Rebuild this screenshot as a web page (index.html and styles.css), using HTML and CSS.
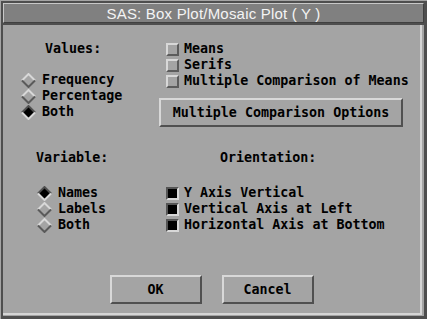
FILE: index.html
```html
<!DOCTYPE html>
<html lang="en">
<head>
  <meta charset="UTF-8">
  <title>SAS: Box Plot/Mosaic Plot ( Y )</title>
  <link rel="stylesheet" href="styles.css">
</head>
<body>
  <div class="window">
    <div class="titlebar">SAS: Box Plot/Mosaic Plot ( Y )</div>
    <div class="panel">
      <div class="content">

        <!-- values + display options -->
        <div class="section top">
          <div class="col left">
            <div class="group-label values-label">Values:</div>
            <div class="options values-options">
              <div class="option">
                <svg class="radio" viewBox="0 0 15 15"><polygon points="7.5,1 14,7.5 7.5,14 1,7.5"/><polyline class="hi" points="1,7.5 7.5,1 14,7.5"/><polyline class="lo" points="1,7.5 7.5,14 14,7.5"/></svg>
                <span>Frequency</span>
              </div>
              <div class="option">
                <svg class="radio" viewBox="0 0 15 15"><polygon points="7.5,1 14,7.5 7.5,14 1,7.5"/><polyline class="hi" points="1,7.5 7.5,1 14,7.5"/><polyline class="lo" points="1,7.5 7.5,14 14,7.5"/></svg>
                <span>Percentage</span>
              </div>
              <div class="option">
                <svg class="radio on" viewBox="0 0 15 15"><polygon points="7.5,1 14,7.5 7.5,14 1,7.5"/><polyline class="hi" points="1,7.5 7.5,1 14,7.5"/><polyline class="lo" points="1,7.5 7.5,14 14,7.5"/></svg>
                <span>Both</span>
              </div>
            </div>
          </div>
          <div class="col right">
            <div class="options">
              <div class="option"><span class="check"></span><span>Means</span></div>
              <div class="option"><span class="check"></span><span>Serifs</span></div>
              <div class="option"><span class="check"></span><span>Multiple Comparison of Means</span></div>
            </div>
            <button class="btn wide">Multiple Comparison Options</button>
          </div>
        </div>

        <!-- variable + orientation -->
        <div class="section bottom">
          <div class="col left">
            <div class="group-label variable-label">Variable:</div>
            <div class="options variable-options">
              <div class="option">
                <svg class="radio on" viewBox="0 0 15 15"><polygon points="7.5,1 14,7.5 7.5,14 1,7.5"/><polyline class="hi" points="1,7.5 7.5,1 14,7.5"/><polyline class="lo" points="1,7.5 7.5,14 14,7.5"/></svg>
                <span>Names</span>
              </div>
              <div class="option">
                <svg class="radio" viewBox="0 0 15 15"><polygon points="7.5,1 14,7.5 7.5,14 1,7.5"/><polyline class="hi" points="1,7.5 7.5,1 14,7.5"/><polyline class="lo" points="1,7.5 7.5,14 14,7.5"/></svg>
                <span>Labels</span>
              </div>
              <div class="option">
                <svg class="radio" viewBox="0 0 15 15"><polygon points="7.5,1 14,7.5 7.5,14 1,7.5"/><polyline class="hi" points="1,7.5 7.5,1 14,7.5"/><polyline class="lo" points="1,7.5 7.5,14 14,7.5"/></svg>
                <span>Both</span>
              </div>
            </div>
          </div>
          <div class="col right">
            <div class="group-label orientation-label">Orientation:</div>
            <div class="options orientation-options">
              <div class="option"><span class="check on"></span><span>Y Axis Vertical</span></div>
              <div class="option"><span class="check on"></span><span>Vertical Axis at Left</span></div>
              <div class="option"><span class="check on"></span><span>Horizontal Axis at Bottom</span></div>
            </div>
          </div>
        </div>

        <div class="actions">
          <button class="btn">OK</button>
          <button class="btn">Cancel</button>
        </div>

      </div>
    </div>
  </div>
</body>
</html>
```

FILE: styles.css
```css
html, body {
  margin: 0;
  padding: 0;
  background: #a4a4a4;
}
.window {
  width: 427px;
  height: 319px;
  box-sizing: border-box;
  background: #4e4e4e;
  border-top: 1px solid #a4a4a4;
  border-left: 1px solid #a4a4a4;
  padding: 2px 3px 3px 2px;
  display: flex;
  flex-direction: column;
}
.titlebar {
  height: 20px;
  box-sizing: border-box;
  background: #808080;
  border-top: 1px solid #c8c8c8;
  border-left: 1px solid #c8c8c8;
  border-right: 1px solid #404040;
  border-bottom: 1px solid #404040;
  margin-bottom: 2px;
  padding-top: 1px;
  color: #f4f4f4;
  font-family: 'Liberation Sans', Arial, sans-serif;
  font-size: 15px;
  letter-spacing: 0.2px;
  line-height: 17px;
  text-align: center;
}
.panel {
  flex: 1;
  background: #a4a4a4;
  padding: 0 2px 1px 0;
  display: flex;
}
.content {
  flex: 1;
  border-right: 2px solid #d4d4d4;
  border-bottom: 2px solid #d4d4d4;
  padding: 16px 0 0 18px;
  font-family: 'DejaVu Sans Mono', 'Liberation Mono', monospace;
  font-weight: bold;
  font-size: 13.33px;
  color: #000;
}
.section {
  display: flex;
}
.col.left {
  width: 138px;
}
.group-label {
  height: 16px;
  line-height: 16px;
  white-space: pre;
}
.values-label {
  margin-left: 24px;
}
.values-options {
  margin-top: 15px;
}
.option {
  display: flex;
  align-items: center;
  height: 16px;
  line-height: 16px;
  white-space: pre;
}
.radio {
  width: 15px;
  height: 15px;
  margin-right: 6px;
  flex: none;
}
.radio polygon {
  fill: #a4a4a4;
}
.radio polyline {
  fill: none;
  stroke-width: 2;
}
.radio .hi {
  stroke: #d8d8d8;
}
.radio .lo {
  stroke: #5a5a5a;
}
.radio.on polygon {
  fill: #000;
}
.radio.on .hi {
  stroke: #505050;
}
.radio.on .lo {
  stroke: #d8d8d8;
}
.col.right .options {
  margin-left: 7px;
}
.check {
  width: 13px;
  height: 13px;
  box-sizing: border-box;
  border: 2px solid;
  border-color: #d8d8d8 #5c5c5c #5c5c5c #d8d8d8;
  background: #a4a4a4;
  margin-right: 5px;
  flex: none;
}
.check.on {
  border-color: #555 #d8d8d8 #d8d8d8 #555;
  background: #000;
}
.btn {
  height: 29px;
  box-sizing: border-box;
  border: 2px solid;
  border-color: #d8d8d8 #505050 #505050 #d8d8d8;
  background: #a4a4a4;
  font: inherit;
  color: #000;
  padding: 0;
  white-space: pre;
}
.btn.wide {
  width: 244px;
  margin-top: 9px;
}
.section.bottom {
  margin-top: 23px;
}
.variable-label {
  margin-left: 15px;
}
.variable-options {
  margin-top: 19px;
  margin-left: 16px;
}
.orientation-label {
  margin-left: 61px;
}
.orientation-options {
  margin-top: 19px;
}
.actions {
  display: flex;
  justify-content: center;
  gap: 20px;
  margin-top: 42px;
  margin-left: -18px;
}
.actions .btn {
  width: 92px;
}
```
